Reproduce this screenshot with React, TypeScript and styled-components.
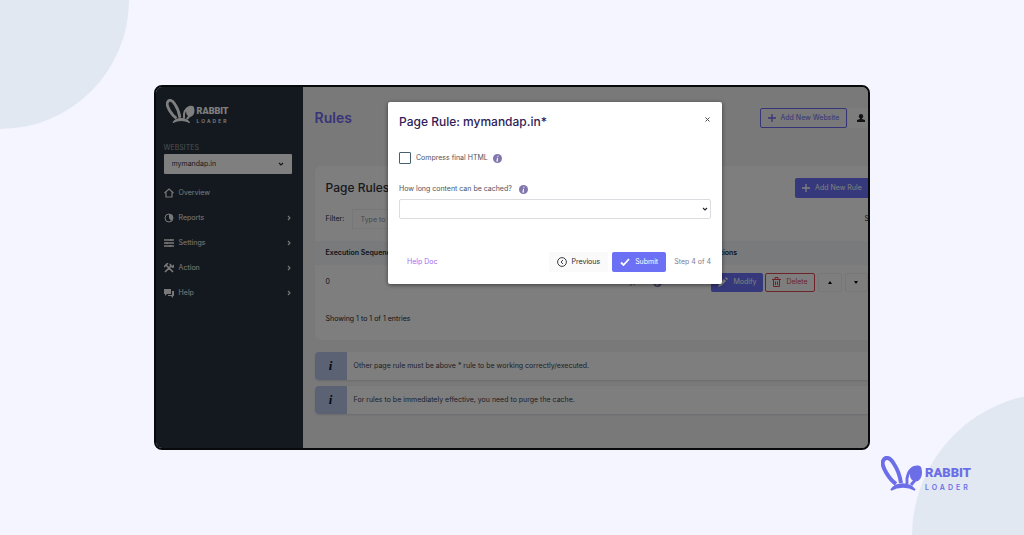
import React from 'react';
import styled, { createGlobalStyle } from 'styled-components';

const Global = createGlobalStyle`
  *, *::before, *::after { box-sizing: border-box; }
  body { margin: 0; background: #f5f5ff; color: #24272c; font-family: Inter, "Liberation Sans", sans-serif; font-size: 7px; line-height: 12px; }
  h1, h2, p { margin: 0; }
  button, input, select { font: inherit; margin: 0; }
  svg { display: block; flex: none; }
`;

const Page = styled.main`
  position: relative;
  min-height: 100vh;
  overflow: hidden;
  padding: 85px 15%;
`;

const Disc = styled.div<{ $corner: 'top' | 'bottom' }>`
  position: absolute;
  border-radius: 50%;
  background: #e1e8f1;
  ${p => p.$corner === 'top'
    ? 'width: 258px; height: 258px; left: -129px; top: -129px;'
    : 'width: 286px; height: 286px; right: -174px; bottom: -144px;'}
`;

const Frame = styled.div`
  position: relative;
  display: flex;
  border: 2px solid #08090b;
  border-radius: 8px;
  overflow: hidden;
  background: #f2f2f4;
`;

const Backdrop = styled.div`
  position: absolute;
  inset: 0;
  display: flex;
  justify-content: center;
  align-items: flex-start;
  padding: 15px 0 0 86px;
  background: rgba(0, 0, 0, 0.5);
`;

const Sidebar = styled.aside`
  flex: 0 0 147px;
  min-height: 361px;
  background: #27323c;
  color: #fff;
  padding: 12px 11px 0 8px;
`;

const LogoBox = styled.div<{ $large?: boolean }>`
  display: flex;
  width: ${p => (p.$large ? 92 : 64)}px;
  margin-left: ${p => (p.$large ? 0 : 2)}px;
  color: ${p => (p.$large ? '#6c6ee8' : '#fff')};
  svg { width: 100%; height: auto; }
`;

const BrandCorner = styled.div`
  position: absolute;
  right: 51px;
  bottom: 43px;
`;

const SideLabel = styled.label`
  display: block;
  margin-top: 18px;
  color: #99a0a6;
`;

const SelectWrap = styled.div<{ $inset: number }>`
  position: relative;
  color: #24272c;
  svg { position: absolute; right: ${p => p.$inset}px; top: 50%; margin-top: -3px; pointer-events: none; }
`;

const SiteSelect = styled.select`
  appearance: none;
  display: block;
  width: 100%;
  height: 20px;
  padding: 0 8px;
  border: 0;
  border-radius: 1px;
  background: #fff;
  color: #30343c;
`;

const Nav = styled.nav`
  display: flex;
  flex-direction: column;
  margin-top: 6px;
`;

const NavLink = styled.a`
  display: flex;
  align-items: center;
  gap: 5px;
  height: 25px;
  color: #f0f0f0;
  text-decoration: none;
  span { flex: 1; }
`;

const Content = styled.section`
  flex: 1;
  min-width: 0;
  padding: 21px 0 31px 12px;
`;

const TopBar = styled.header`
  display: flex;
  align-items: center;
  height: 20px;
`;

const Title = styled.h1`
  flex: 1;
  font: 600 14px/20px Inter, sans-serif;
  color: #7069f0;
`;

const Button = styled.button<{ $kind?: 'primary' | 'outline' | 'danger' | 'plain' }>`
  display: inline-flex;
  align-items: center;
  justify-content: center;
  gap: 5px;
  height: 20px;
  padding: 0 7px;
  border: 1px solid transparent;
  border-radius: 2px;
  white-space: nowrap;
  ${p => p.$kind === 'primary' && 'background: #6b70f5; color: #fff;'}
  ${p => p.$kind === 'outline' && 'background: transparent; color: #7069f0; border-color: #7069f0;'}
  ${p => p.$kind === 'danger' && 'background: transparent; color: #dc4650; border-color: #dc4650;'}
  ${p => p.$kind === 'plain' && 'background: #fafafa; color: #24272c;'}
`;

const UserButton = styled(Button)`
  width: 20px;
  padding: 0 3px;
  border: 0;
  margin-left: 1px;
  justify-content: flex-end;
`;

const Card = styled.section`
  margin-top: 38px;
  padding: 12px 0 15px;
  border-radius: 6px 0 0 6px;
  background: #fcfcfd;
`;

const CardHead = styled.div`
  display: flex;
  align-items: center;
  justify-content: space-between;
  padding-left: 11px;
  button { width: 73px; border-radius: 2px 0 0 2px; }
`;

const CardTitle = styled.h2`
  font: 500 12px/20px Inter, sans-serif;
  color: #30343a;
`;

const FilterRow = styled.div`
  display: flex;
  align-items: center;
  height: 20px;
  margin-top: 11px;
  padding-left: 11px;
  label { width: 26px; }
`;

const FilterInput = styled.input`
  width: 110px;
  height: 20px;
  padding: 0 8px;
  border: 1px solid #eeeef2;
  background: transparent;
  &::placeholder { color: #8f9399; opacity: 1; }
`;

const Clipped = styled.span`
  flex: none;
  width: 4px;
  margin-left: auto;
  overflow: hidden;
`;

const Table = styled.table`
  width: 100%;
  margin-top: 12px;
  border-collapse: collapse;
  table-layout: fixed;
  th { height: 24px; padding: 0 0 0 11px; text-align: left; font-weight: 600; background: #f1f4f8; }
  td { height: 34px; padding: 0 0 0 11px; }
  th:nth-child(2), td:nth-child(2) { width: 130px; padding: 0; }
  th:last-child, td:last-child { width: 157px; padding: 0; }
`;

const StatusCell = styled.div`
  display: flex;
  align-items: center;
  gap: 4px;
  padding-left: 20px;
`;

const Actions = styled.div`
  display: flex;
  align-items: center;
  gap: 2px;
  button { height: 19px; padding: 0 6px; }
`;

const StepButton = styled(Button)`
  width: 26px;
  margin-left: 1px;
  background: #fdfdfd;
  border-color: #eeeef0;
`;

const Entries = styled.p`
  padding: 14px 11px 0;
`;

const Notice = styled.div<{ $gap: number }>`
  display: flex;
  align-items: center;
  height: 28px;
  margin-top: ${p => p.$gap}px;
  border-radius: 4px 0 0 4px;
  overflow: hidden;
  background: #fcfcfd;
  box-shadow: 0 1px 2px #d8d8de;
  color: #3c3f4a;
`;

const NoticeIcon = styled.span`
  width: 32px;
  margin-right: 7px;
  background: #b4c4e8;
  color: #14161c;
  text-align: center;
  font: italic 700 13px/28px "Liberation Serif", serif;
`;

const Modal = styled.div`
  width: 334px;
  max-width: 90%;
  padding: 10px 11px 12px;
  background: #fff;
  border-radius: 2px;
  box-shadow: 0 1px 4px rgba(0, 0, 0, 0.5);
`;

const ModalHead = styled.div`
  display: flex;
  justify-content: space-between;
  align-items: center;
`;

const ModalTitle = styled.h2`
  font: 500 12px/20px Inter, sans-serif;
  color: #2f1c58;
`;

const CloseButton = styled.button`
  display: flex;
  align-items: center;
  justify-content: center;
  width: 8px;
  height: 12px;
  margin-top: -6px;
  padding: 0;
  border: 0;
  background: none;
  color: #4a4a58;
`;

const CheckRow = styled.div`
  display: flex;
  align-items: center;
  height: 12px;
  margin-top: 20px;
  label { margin: 0 5px; color: #4c5262; }
`;

const CheckBox = styled.input`
  appearance: none;
  width: 12px;
  height: 12px;
  border: 1px solid #466070;
  border-radius: 1px;
  background: #fff;
`;

const FieldLabel = styled.div`
  display: flex;
  align-items: center;
  gap: 7px;
  height: 12px;
  margin: 19px 0 4px;
  color: #4c5262;
`;

const CacheSelect = styled.select`
  appearance: none;
  display: block;
  width: 100%;
  height: 20px;
  border: 1px solid #dcdce0;
  border-radius: 2px;
  background: #fff;
`;

const ModalFoot = styled.div`
  display: flex;
  align-items: center;
  gap: 4px;
  margin-top: 33px;
`;

const HelpLink = styled.a`
  margin: 0 auto 0 8px;
  color: #9b6ef0;
  text-decoration: none;
`;

const Step = styled.span`
  margin-left: 4px;
  color: #7b7b90;
`;

const Wordmark = styled.text`
  fill: currentColor;
  font: 900 13px Roboto, sans-serif;
`;

const Tagline = styled.text`
  fill: currentColor;
  font: 600 7px Inter, sans-serif;
  letter-spacing: 3px;
`;

function Logo() {
  return (
    <svg viewBox="0 0 92 36" fill="none" role="img" aria-label="Rabbit Loader">
      <path d="M15 28C8 23 0 10 2 5C4 0 9 1 13 8C17 14 19 20 20 27" stroke="currentColor" strokeWidth="4" />
      <path d="M26 28C25 20 28 14 33 12" stroke="currentColor" strokeWidth="3" />
      <path d="M30 12C33 9 38 9 40 11C42 17 41 22 37 25C33 26 29 24 29 19C28 16 29 13 30 12Z" fill="currentColor" />
      <path d="M35 23L30 29" stroke="currentColor" strokeWidth="3" />
      <path d="M10 34C15 26 28 26 34 34C27 30 17 30 10 34Z" fill="currentColor" stroke="currentColor" strokeWidth="1.6" />
      <Wordmark x="44" y="21">RABBIT</Wordmark>
      <Tagline x="44" y="34">LOADER</Tagline>
    </svg>
  );
}

function Chevron({ side = false }: { side?: boolean }) {
  return (
    <svg width="6" height="6" viewBox="0 0 6 6" fill="none" stroke="currentColor" strokeWidth="1.1">
      <path d={side ? 'M2 1L4 3L2 5' : 'M1 2L3 4L5 2'} />
    </svg>
  );
}

function Triangle({ down = false }: { down?: boolean }) {
  return (
    <svg width="4" height="3" viewBox="0 0 4 3" fill="currentColor">
      <path d={down ? 'M0 0H4L2 3Z' : 'M0 3H4L2 0Z'} />
    </svg>
  );
}

function Plus() {
  return (
    <svg width="8" height="8" viewBox="0 0 8 8" stroke="currentColor" strokeWidth="1.3"><path d="M4 0V8M0 4H8" /></svg>
  );
}

function Info() {
  return (
    <svg width="9" height="9" viewBox="0 0 9 9">
      <circle cx="4.5" cy="4.5" r="4.5" fill="#8276ad" />
      <path d="M4.9 1.8V2.8M4.6 3.8L4 7H5" stroke="#fff" strokeWidth="1.1" fill="none" />
    </svg>
  );
}

function Check() {
  return (
    <svg width="10" height="8" viewBox="0 0 10 8" fill="none" stroke="currentColor" strokeWidth="1.8"><path d="M1 4.5L3.5 7L9 1" /></svg>
  );
}

function Pencil() {
  return (
    <svg width="10" height="10" viewBox="0 0 10 10" fill="currentColor"><path d="M0 10L1 7L6 2L8 4L3 9ZM7 1L8 0L10 2L9 3Z" /></svg>
  );
}

function Trash() {
  return (
    <svg width="9" height="10" viewBox="0 0 9 10" fill="none" stroke="currentColor">
      <path d="M0 2.5H9M3 2V.5H6V2M1.5 3V9.5H7.5V3M3.5 4.5V8M5.5 4.5V8" />
    </svg>
  );
}

function CircleLeft() {
  return (
    <svg width="10" height="10" viewBox="0 0 10 10" fill="none" stroke="currentColor" strokeWidth=".9">
      <circle cx="5" cy="5" r="4.4" /><path d="M6 3L4 5L6 7" />
    </svg>
  );
}

const navIcons: Record<string, React.ReactNode> = {
  Overview: <path d="M.5 5L5 1L9.5 5M2 4.5V9H8V4.5" fill="none" stroke="currentColor" strokeWidth="1.2" />,
  Reports: <><circle cx="5" cy="5" r="4" fill="none" stroke="currentColor" /><path d="M5 5V1A4 4 0 0 1 9 5L7 8Z" fill="currentColor" /></>,
  Settings: <path d="M0 2H10M0 5H10M0 8H10M7 1V3M3 4V6M6 7V9" fill="none" stroke="currentColor" strokeWidth="1.3" />,
  Action: <path d="M1 9L7 3M2 2L9 9M0 4L4 0M6 1L7 3L9 4L10 2" fill="none" stroke="currentColor" strokeWidth="1.7" />,
  Help: <><path d="M0 1H7V6H3L1 8V6H0Z" fill="currentColor" /><path d="M8 3H10V8H9V10L7 8H4V7H8Z" fill="currentColor" /></>,
};

export default function App() {
  return (
    <Page>
      <Global />
      <Disc $corner="top" />
      <Disc $corner="bottom" />
      <Frame>
        <Sidebar>
          <LogoBox><Logo /></LogoBox>
          <SideLabel htmlFor="site">WEBSITES</SideLabel>
          <SelectWrap $inset={8}>
            <SiteSelect id="site"><option>mymandap.in</option></SiteSelect>
            <Chevron />
          </SelectWrap>
          <Nav>
            {Object.keys(navIcons).map(name => (
              <NavLink href="#" key={name}>
                <svg width="10" height="10" viewBox="0 0 10 10">{navIcons[name]}</svg>
                <span>{name}</span>
                {name !== 'Overview' && <Chevron side />}
              </NavLink>
            ))}
          </Nav>
        </Sidebar>
        <Content>
          <TopBar>
            <Title>Rules</Title>
            <Button $kind="outline"><Plus />Add New Website</Button>
            <UserButton $kind="plain" aria-label="Account">
              <svg width="8" height="8" viewBox="0 0 8 8" fill="currentColor"><circle cx="4" cy="2.2" r="2.2" /><path d="M3 4H5V5L8 6V8H0V6L3 5Z" /></svg>
            </UserButton>
          </TopBar>
          <Card>
            <CardHead><CardTitle>Page Rules</CardTitle><Button $kind="primary"><Plus />Add New Rule</Button></CardHead>
            <FilterRow>
              <label htmlFor="filter">Filter:</label>
              <FilterInput id="filter" placeholder="Type to filter" />
              <Clipped>S</Clipped>
            </FilterRow>
            <Table>
              <thead><tr><th>Execution Sequence</th><th>Status</th><th>Actions</th></tr></thead>
              <tbody><tr>
                <td>0</td>
                <td><StatusCell>Cache Bypass<Info /></StatusCell></td>
                <td><Actions>
                  <Button $kind="primary"><Pencil />Modify</Button>
                  <Button $kind="danger"><Trash />Delete</Button>
                  <StepButton aria-label="Move up"><Triangle /></StepButton>
                  <StepButton aria-label="Move down"><Triangle down /></StepButton>
                </Actions></td>
              </tr></tbody>
            </Table>
            <Entries>Showing 1 to 1 of 1 entries</Entries>
          </Card>
          <Notice $gap={12}><NoticeIcon>i</NoticeIcon>Other page rule must be above * rule to be working correctly/executed.</Notice>
          <Notice $gap={6}><NoticeIcon>i</NoticeIcon>For rules to be immediately effective, you need to purge the cache.</Notice>
        </Content>
        <Backdrop>
          <Modal role="dialog" aria-labelledby="rule-title">
            <ModalHead>
              <ModalTitle id="rule-title">Page Rule: mymandap.in*</ModalTitle>
              <CloseButton aria-label="Close">
                <svg width="5" height="5" viewBox="0 0 5 5" stroke="currentColor"><path d="M.5 .5L4.5 4.5M4.5 .5L.5 4.5" /></svg>
              </CloseButton>
            </ModalHead>
            <CheckRow><CheckBox type="checkbox" id="compress" /><label htmlFor="compress">Compress final HTML</label><Info /></CheckRow>
            <FieldLabel><label htmlFor="cache">How long content can be cached?</label><Info /></FieldLabel>
            <SelectWrap $inset={3}><CacheSelect id="cache" /><Chevron /></SelectWrap>
            <ModalFoot>
              <HelpLink href="#">Help Doc</HelpLink>
              <Button $kind="plain"><CircleLeft />Previous</Button>
              <Button $kind="primary"><Check />Submit</Button>
              <Step>Step 4 of 4</Step>
            </ModalFoot>
          </Modal>
        </Backdrop>
      </Frame>
      <BrandCorner><LogoBox $large><Logo /></LogoBox></BrandCorner>
    </Page>
  );
}
